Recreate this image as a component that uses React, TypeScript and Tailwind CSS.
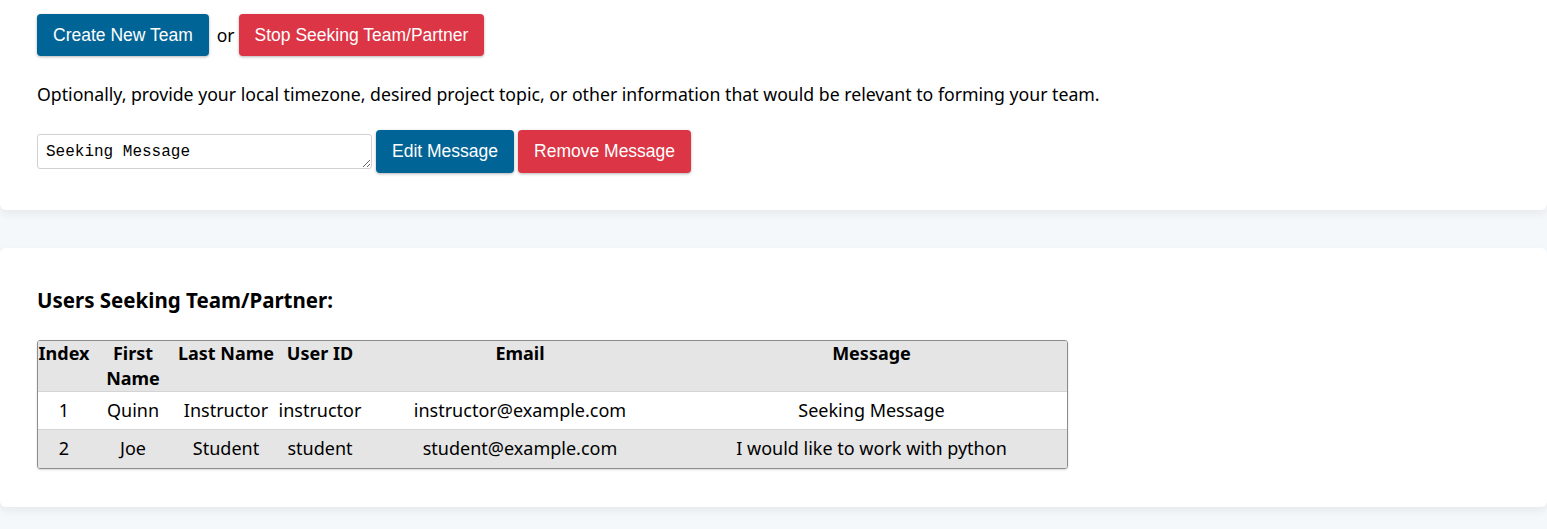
const users = [
  { index: 1, first: "Quinn", last: "Instructor", id: "instructor", email: "instructor@example.com", message: "Seeking Message" },
  { index: 2, first: "Joe", last: "Student", id: "student", email: "student@example.com", message: "I would like to work with python" },
]

const btn =
  "h-[42px] px-[16px] rounded-[4px] text-white text-[17.5px] shadow-[0_1px_3px_rgba(0,0,0,0.3)] font-['Liberation_Sans',Arial,sans-serif]"

export default function App() {
  return (
    <div className="min-h-[529px] bg-[#f4f8fb] font-['Noto_Sans',sans-serif] text-black">
      <section className="bg-white rounded-b-[6px] shadow-[0_4px_10px_rgba(0,0,0,0.06)] px-[37px] pt-[14px] pb-[37px]">
        <div className="flex items-center">
          <button className={`${btn} bg-[#006496]`}>Create New Team</button>
          <span className="ml-[8px] mr-[4px] text-[17.5px]">or</span>
          <button className={`${btn} bg-[#dc3545]`}>Stop Seeking Team/Partner</button>
        </div>
        <p className="mt-[25px] text-[17.7px] leading-[26px]">
          Optionally, provide your local timezone, desired project topic, or other information that would be relevant to forming your team.
        </p>
        <div className="mt-[23px] flex items-center gap-1">
          <textarea
            defaultValue="Seeking Message"
            rows={1}
            className="w-[335px] h-[35px] border border-[#d0d0d0] rounded-[3px] px-2 pt-[7px] text-[16px] leading-[20px] font-['Liberation_Mono',monospace] resize-y"
          />
          <button className={`${btn} h-[43px] bg-[#006496]`}>Edit Message</button>
          <button className={`${btn} h-[43px] bg-[#dc3545]`}>Remove Message</button>
        </div>
      </section>

      <section className="mt-[38px] bg-white rounded-[6px] shadow-[0_4px_10px_rgba(0,0,0,0.06)] px-[37px] pt-[38px] pb-[38px]">
        <h2 className="text-[20.5px] font-bold leading-[28px]">Users Seeking Team/Partner:</h2>
        <div className="mt-[26px] w-[1031px] border border-[#8c8c8c] rounded-[3px] overflow-hidden shadow-[0_1px_2px_rgba(0,0,0,0.15)]">
          <table className="w-full border-collapse text-center text-[18px] leading-[25px]">
            <thead>
              <tr className="bg-[#e5e5e5] align-top">
                <th className="w-[52px] font-bold">Index</th>
                <th className="w-[86px] font-bold">First Name</th>
                <th className="w-[100px] font-bold">Last Name</th>
                <th className="w-[88px] font-bold">User ID</th>
                <th className="w-[312px] font-bold">Email</th>
                <th className="font-bold">Message</th>
              </tr>
            </thead>
            <tbody>
              {users.map((u) => (
                <tr key={u.index} className={`border-t border-[#d4d4d4] h-[38px] ${u.index % 2 === 0 ? "bg-[#e5e5e5]" : "bg-white"}`}>
                  <td>{u.index}</td>
                  <td>{u.first}</td>
                  <td>{u.last}</td>
                  <td>{u.id}</td>
                  <td>{u.email}</td>
                  <td>{u.message}</td>
                </tr>
              ))}
            </tbody>
          </table>
        </div>
      </section>
    </div>
  )
}
